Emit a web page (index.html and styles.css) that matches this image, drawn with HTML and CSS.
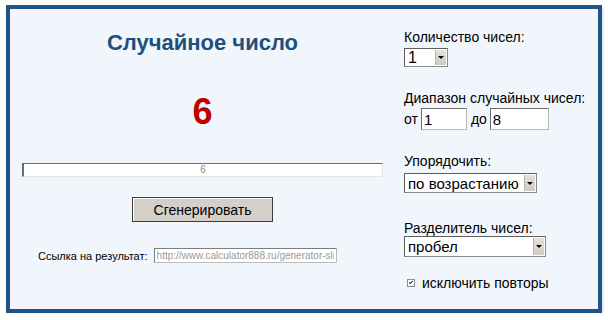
FILE: index.html
```html
<!DOCTYPE html>
<html lang="ru">
<head>
  <meta charset="UTF-8">
  <meta name="viewport" content="width=device-width, initial-scale=1.0">
  <title>Случайное число</title>
  <link rel="stylesheet" href="styles.css">
</head>
<body>
  <div class="panel">
    <div class="main">
      <h1 class="title">Случайное число</h1>
      <div class="number">6</div>
      <div class="result">6</div>
      <div class="actions">
        <button class="generate">Сгенерировать</button>
      </div>
      <div class="link-row">
        <label for="link">Ссылка на результат:</label>
        <input type="text" id="link" class="link-input" value="http://www.calculator888.ru/generator-sluchaynyh-chisel/" readonly>
      </div>
    </div>

    <div class="options">
      <div class="group group-count">
        <label>Количество чисел:</label>
        <div class="select select-count">
          <select><option>1</option></select>
          <span class="arrow"></span>
        </div>
      </div>

      <div class="group group-range">
        <label>Диапазон случайных чисел:</label>
        <div class="range-row">
          <span>от</span><input type="text" class="num num-from" value="1">
          <span class="to">до</span><input type="text" class="num num-to" value="8">
        </div>
      </div>

      <div class="group group-sort">
        <label>Упорядочить:</label>
        <div class="select select-sort">
          <select><option>по возрастанию</option></select>
          <span class="arrow"></span>
        </div>
      </div>

      <div class="group group-sep">
        <label>Разделитель чисел:</label>
        <div class="select select-sep">
          <select><option>пробел</option></select>
          <span class="arrow"></span>
        </div>
      </div>

      <div class="check-row">
        <input type="checkbox" id="unique" class="check" checked>
        <label for="unique">исключить повторы</label>
      </div>
    </div>
  </div>
</body>
</html>
```

FILE: styles.css
```css
body {
  margin: 0;
  background: #fff;
  font-family: "Liberation Sans", Arial, sans-serif;
  color: #000;
}
.panel {
  box-sizing: border-box;
  width: 596px;
  height: 308px;
  margin: 5px 0 0 6px;
  border: 4px solid #1d5686;
  background: #f0f6fc;
  box-shadow: 1px 2px 2px rgba(120, 150, 180, 0.35);
  display: flex;
  padding-left: 12px;
}
.main {
  width: 361px;
  display: flex;
  flex-direction: column;
}
.title {
  margin: 21px 0 0;
  font-size: 22px;
  line-height: 26px;
  font-weight: bold;
  color: #1d4f7c;
  text-align: center;
}
.number {
  margin-top: 36px;
  font-size: 36px;
  line-height: 40px;
  font-weight: bold;
  color: #c00000;
  text-align: center;
}
.result {
  box-sizing: border-box;
  margin-top: 31px;
  height: 14px;
  border-top: 1px solid #6e6e6e;
  border-left: 2px solid #6e6e6e;
  border-right: 1px solid #e4e4e4;
  border-bottom: 1px solid #e4e4e4;
  background: #fff;
  color: #8a8a8a;
  font-size: 10px;
  line-height: 12px;
  text-align: center;
}
.actions {
  margin-top: 20px;
  text-align: center;
}
.generate {
  width: 141px;
  height: 25px;
  padding: 0;
  background: #d4d0c8;
  border: 1px solid #3c3c3c;
  border-radius: 0;
  box-shadow: inset 1px 1px 0 #fff;
  font-family: "Liberation Sans", Arial, sans-serif;
  font-size: 14px;
  color: #000;
}
.link-row {
  margin: 26px 0 0 16px;
  display: flex;
  align-items: center;
  font-size: 11px;
}
.link-row label {
  margin-right: 6px;
}
.link-input {
  box-sizing: border-box;
  width: 183px;
  height: 15px;
  padding: 0 2px;
  border: 1px solid #bcbcbc;
  border-top-color: #7d7d7d;
  border-left-color: #7d7d7d;
  background: #fff;
  color: #9a9a9a;
  font-family: "Liberation Sans", Arial, sans-serif;
  font-size: 10px;
  outline: none;
}
.options {
  margin-left: 21px;
  padding-top: 20px;
  font-size: 14px;
}
.group label {
  display: block;
  line-height: 16px;
}
.group-count label {
  margin-bottom: 3px;
}
.group-range {
  margin-top: 23px;
}
.group-range label {
  margin-bottom: 2px;
}
.group-sort {
  margin-top: 23px;
}
.group-sort label {
  margin-bottom: 4px;
}
.group-sep {
  margin-top: 27px;
}
.group-sep label {
  margin-bottom: 0;
}
.select {
  box-sizing: border-box;
  display: flex;
  align-items: stretch;
  border: 1px solid #8a8a8a;
  border-top-color: #5e5e5e;
  border-left-color: #5e5e5e;
  background: #fff;
}
.select select {
  flex: 1;
  min-width: 0;
  appearance: none;
  -webkit-appearance: none;
  border: none;
  outline: none;
  background: transparent;
  padding: 0 0 0 3px;
  font-family: "Liberation Sans", Arial, sans-serif;
  font-size: 15px;
  color: #000;
}
.select-count select {
  font-size: 16px;
}
.arrow {
  width: 10px;
  margin: 1px;
  background: linear-gradient(#e4e1dc, #cfcbc3);
  border-left: 1px solid #b9b5ad;
  display: flex;
  align-items: center;
  justify-content: center;
}
.arrow::after {
  content: "";
  border-left: 3px solid transparent;
  border-right: 3px solid transparent;
  border-top: 3px solid #000;
}
.select-count {
  width: 44px;
  height: 19px;
}
.select-sort {
  width: 133px;
  height: 20px;
}
.select-sep {
  width: 142px;
  height: 21px;
}
.range-row {
  display: flex;
  align-items: center;
  height: 22px;
}
.num {
  box-sizing: border-box;
  height: 22px;
  margin-left: 3px;
  padding: 0 2px;
  border: 1px solid #b5b5b5;
  border-top-color: #6c6c6c;
  border-left-color: #6c6c6c;
  background: #fff;
  font-family: "Liberation Sans", Arial, sans-serif;
  font-size: 15px;
  outline: none;
}
.num-from {
  width: 46px;
}
.num-to {
  width: 59px;
}
.to {
  margin-left: 4px;
}
.check-row {
  margin: 18px 0 0 3px;
  display: flex;
  align-items: center;
}
.check {
  appearance: none;
  -webkit-appearance: none;
  box-sizing: border-box;
  width: 8px;
  height: 8px;
  margin: 0 7px 0 0;
  border: 1px solid #8e8e8e;
  background: #fff;
  display: flex;
  align-items: center;
  justify-content: center;
}
.check:checked::after {
  content: "";
  width: 3px;
  height: 1px;
  margin-top: -2px;
  border-left: 1px solid #222;
  border-bottom: 1px solid #222;
  transform: rotate(-45deg);
}
```
